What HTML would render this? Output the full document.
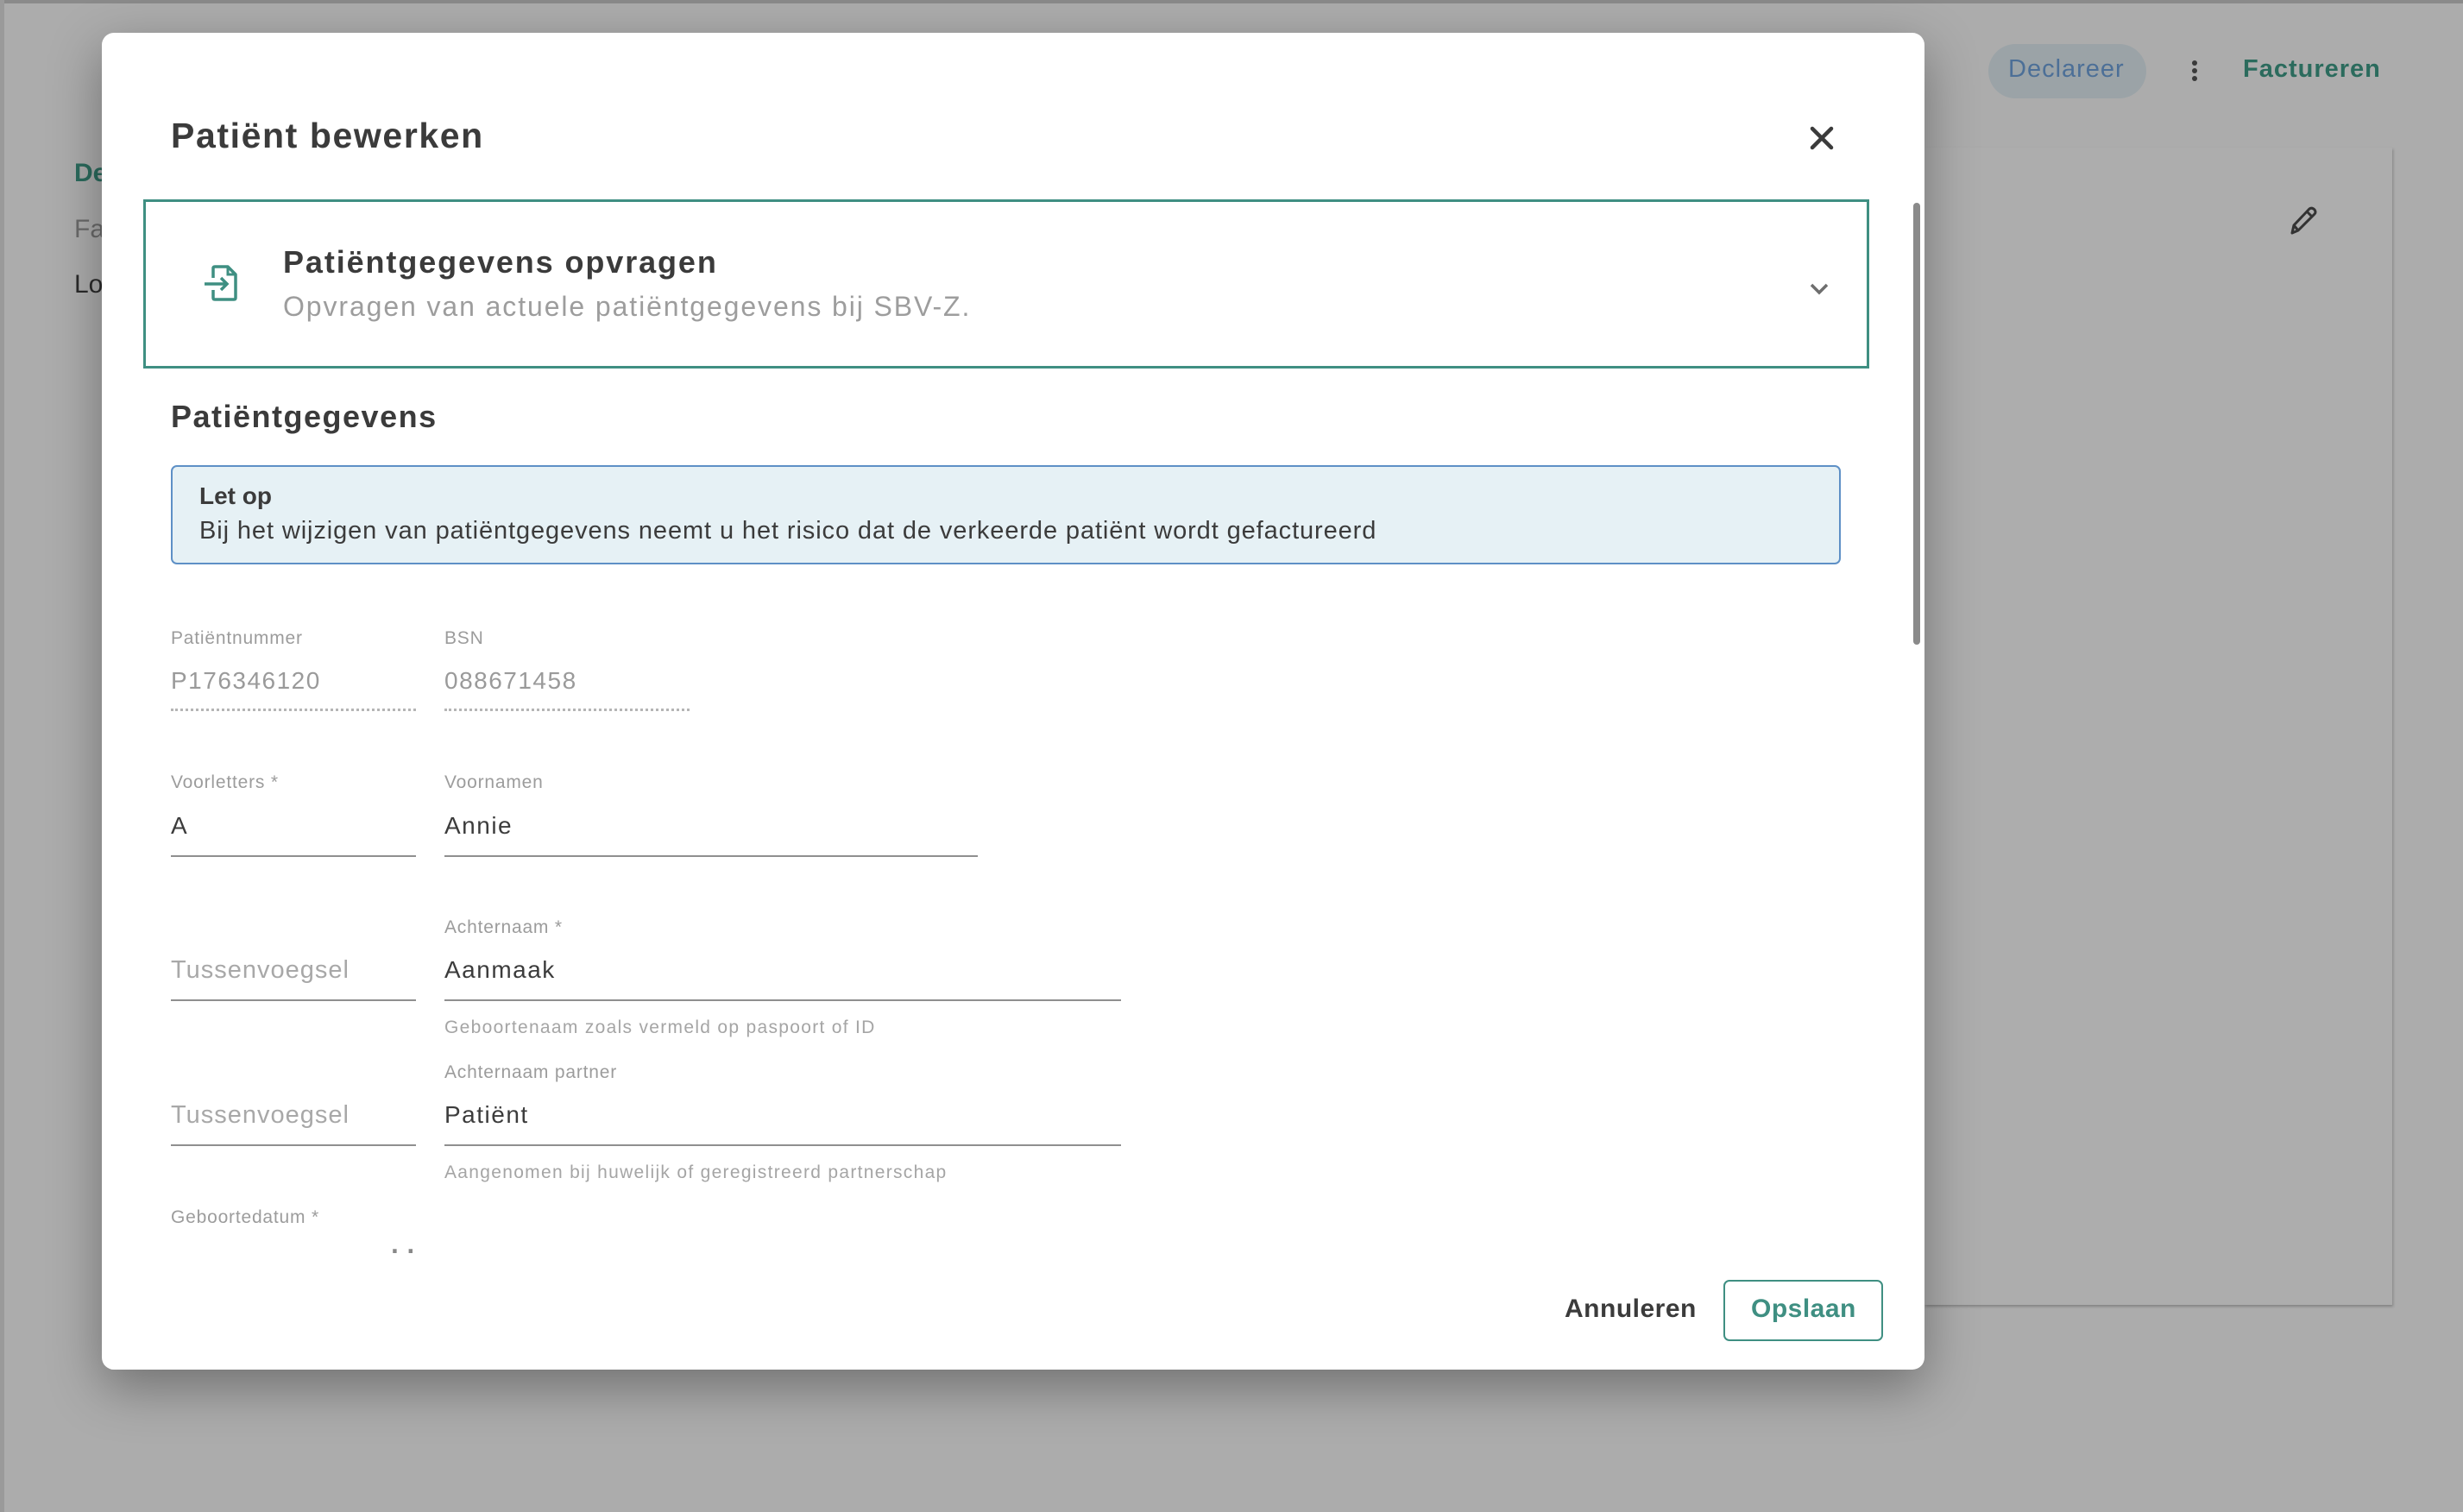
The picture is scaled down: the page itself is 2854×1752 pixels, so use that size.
<!DOCTYPE html>
<html><head><meta charset="utf-8"><style>
*{margin:0;padding:0;box-sizing:border-box}
body{width:2854px;height:1752px;background:#acacac;font-family:"Liberation Sans",sans-serif;position:relative;overflow:hidden}
.a{position:absolute;white-space:nowrap}
.lbl{font-size:21px;color:#9c9c9c;letter-spacing:.8px}
.val{font-size:28px;color:#3c3c3c;letter-spacing:1.5px}
.ph{font-size:29px;color:#a8a8a8;letter-spacing:1px}
.ln{position:absolute;height:2px;background:#8f8f8f}
.dl{position:absolute;border-top:3px dotted #b5b5b5}
.hint{font-size:21px;color:#a5a5a5;letter-spacing:1.3px}
</style></head><body>
<div class="a" style="left:0;top:0;width:2854px;height:4px;background:#8a8a8a"></div>
<div class="a" style="left:0;top:0;width:5px;height:1752px;background:#9a9a9a"></div>
<div class="a" style="left:2230px;top:171px;width:542px;height:1341px;background:#adadad;box-shadow:1px 2px 3px rgba(0,0,0,.25)"></div>
<div class="a" style="left:2304px;top:51px;width:183px;height:63px;border-radius:32px;background:#9ba3a7"></div>
<div class="a" style="left:2327px;top:64px;font-size:29px;color:#4c6f97;letter-spacing:1px">Declareer</div>
<div class="a" style="left:2540px;top:70px;width:6px;height:6px;border-radius:3px;background:#3a3a3a;box-shadow:0 9px 0 #3a3a3a,0 18px 0 #3a3a3a"></div>
<div class="a" style="left:2599px;top:64px;font-size:29px;font-weight:bold;color:#2b6b5d;letter-spacing:1px">Factureren</div>
<svg class="a" style="left:2648px;top:236px" width="40" height="40" viewBox="0 0 40 40"><path d="M8 34 L10 25 L28 6 Q31 4 34 7 Q36 10 34 12 L15 31 Z M25 9 L31 15 M10 25 L15 31" fill="none" stroke="#333" stroke-width="3" stroke-linejoin="round"/></svg>
<div class="a" style="left:86px;top:184px;font-size:30px;font-weight:bold;color:#2b6b5d">De</div>
<div class="a" style="left:86px;top:249px;font-size:30px;color:#6a6a6a">Fa</div>
<div class="a" style="left:86px;top:313px;font-size:30px;color:#2a2a2a">Lo</div>
<div class="a" style="left:118px;top:38px;width:2112px;height:1549px;background:#fff;border-radius:14px;box-shadow:0 20px 60px rgba(0,0,0,.35);overflow:hidden">
<div class="a" style="left:80px;top:96px;font-size:41px;font-weight:bold;color:#3b3b3b;letter-spacing:1.6px">Patiënt bewerken</div>
<svg class="a" style="left:1978px;top:107px" width="30" height="30" viewBox="0 0 30 30"><path d="M4 4L26 26M26 4L4 26" stroke="#3b3b3b" stroke-width="4.5" stroke-linecap="round"/></svg>
<div class="a" style="left:48px;top:193px;width:2000px;height:196px;border:3px solid #3f8f82"></div>
<svg class="a" style="left:116px;top:268px" width="44" height="44" viewBox="0 0 44 44"><path d="M13 16V5Q13 3 15 3H30L39 12V39Q39 41 37 41H15Q13 41 13 39V30" fill="none" stroke="#3f8f82" stroke-width="3.5" stroke-linejoin="round"/><path d="M30 3V12H39" fill="none" stroke="#3f8f82" stroke-width="3"/><path d="M3 23H29M22 16L29 23L22 30" fill="none" stroke="#3f8f82" stroke-width="3.5"/></svg>
<div class="a" style="left:210px;top:245px;font-size:36px;font-weight:bold;color:#3b3b3b;letter-spacing:1.9px">Patiëntgegevens opvragen</div>
<div class="a" style="left:210px;top:299px;font-size:32px;color:#9d9d9d;letter-spacing:1.9px">Opvragen van actuele patiëntgegevens bij SBV-Z.</div>
<svg class="a" style="left:1978px;top:288px" width="24" height="18" viewBox="0 0 24 18"><path d="M3 4L12 13L21 4" fill="none" stroke="#6e6e6e" stroke-width="3.5"/></svg>
<div class="a" style="left:2099px;top:197px;width:8px;height:512px;border-radius:4px;background:#8a8a8a"></div>
<div class="a" style="left:80px;top:424px;font-size:36px;font-weight:bold;color:#3b3b3b;letter-spacing:1.5px">Patiëntgegevens</div>
<div class="a" style="left:80px;top:501px;width:1935px;height:115px;background:#e6f1f5;border:2px solid #5e90c6;border-radius:7px"></div>
<div class="a" style="left:113px;top:521px;font-size:28px;font-weight:bold;color:#3b3b3b">Let op</div>
<div class="a" style="left:113px;top:561px;font-size:29px;color:#3b3b3b;letter-spacing:.9px">Bij het wijzigen van patiëntgegevens neemt u het risico dat de verkeerde patiënt wordt gefactureerd</div>
<div style="position:absolute;left:0;top:0;width:2112px;height:1414px;overflow:hidden">
<div class="a lbl" style="left:80px;top:690px">Patiëntnummer</div>
<div class="a lbl" style="left:397px;top:690px">BSN</div>
<div class="a val" style="left:80px;top:735px;color:#9a9a9a">P176346120</div>
<div class="a val" style="left:397px;top:735px;color:#9a9a9a">088671458</div>
<div class="dl" style="left:80px;top:783px;width:284px"></div>
<div class="dl" style="left:397px;top:783px;width:284px"></div>
<div class="a lbl" style="left:80px;top:857px">Voorletters *</div>
<div class="a lbl" style="left:397px;top:857px">Voornamen</div>
<div class="a val" style="left:80px;top:903px">A</div>
<div class="a val" style="left:397px;top:903px">Annie</div>
<div class="ln" style="left:80px;top:953px;width:284px"></div>
<div class="ln" style="left:397px;top:953px;width:618px"></div>
<div class="a lbl" style="left:397px;top:1025px">Achternaam *</div>
<div class="a ph" style="left:80px;top:1070px">Tussenvoegsel</div>
<div class="a val" style="left:397px;top:1070px">Aanmaak</div>
<div class="ln" style="left:80px;top:1120px;width:284px"></div>
<div class="ln" style="left:397px;top:1120px;width:784px"></div>
<div class="a hint" style="left:397px;top:1141px">Geboortenaam zoals vermeld op paspoort of ID</div>
<div class="a lbl" style="left:397px;top:1193px">Achternaam partner</div>
<div class="a ph" style="left:80px;top:1238px">Tussenvoegsel</div>
<div class="a val" style="left:397px;top:1238px">Patiënt</div>
<div class="ln" style="left:80px;top:1288px;width:284px"></div>
<div class="ln" style="left:397px;top:1288px;width:784px"></div>
<div class="a hint" style="left:397px;top:1309px">Aangenomen bij huwelijk of geregistreerd partnerschap</div>
<div class="a lbl" style="left:80px;top:1361px">Geboortedatum *</div>
<div class="a val" style="left:80px;top:1408px;color:#888">12-12-2000 &nbsp;&nbsp;&nbsp;&nbsp;&nbsp;&nbsp;&nbsp;&nbsp; ┇┇</div>
</div>
<div class="a" style="left:1695px;top:1462px;font-size:30px;font-weight:bold;color:#3b3b3b;letter-spacing:.5px">Annuleren</div>
<div class="a" style="left:1879px;top:1445px;width:185px;height:71px;border:2.5px solid #3f8f82;border-radius:7px"></div>
<div class="a" style="left:1911px;top:1462px;font-size:30px;font-weight:bold;color:#3f8f82;letter-spacing:.5px">Opslaan</div>
</div>
</body></html>
